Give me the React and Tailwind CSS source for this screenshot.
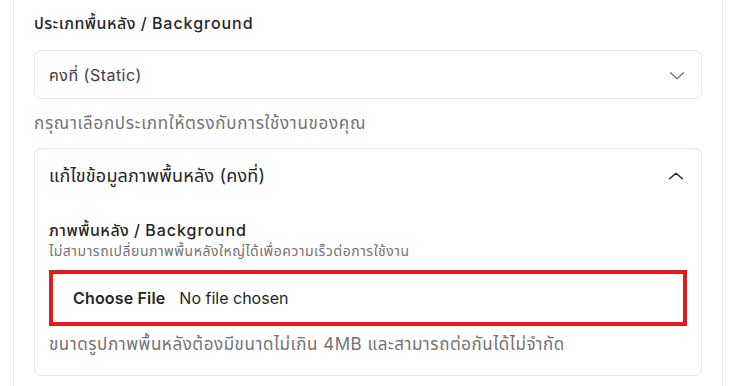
import React from "react";

function ChevronDown() {
  return (
    <svg width="22" height="22" viewBox="0 0 24 24" fill="none" stroke="#737373" strokeWidth="1.4" strokeLinecap="round" strokeLinejoin="round">
      <path d="M5 9.5l7 6.5 7-6.5" />
    </svg>
  );
}
function ChevronUp() {
  return (
    <svg width="22" height="22" viewBox="0 0 24 24" fill="none" stroke="#262626" strokeWidth="1.6" strokeLinecap="round" strokeLinejoin="round">
      <path d="M5 15l7-6 7 6" />
    </svg>
  );
}

export default function App() {
  return (
    <div className="w-[736px] h-[386px] overflow-hidden bg-white" style={{ fontFamily: 'Inter, "Noto Sans Thai", "Noto Sans", sans-serif' }}>
      <div className="ml-[13px] mr-[13px] h-full border-x border-[#e5e5e5] pl-[20px] pr-[20px] pt-[11px] text-[#262626]">
        <div className="text-[16px] font-medium leading-[24px] tracking-[0.03em]">
          ประเภทพื้นหลัง / <span className="tracking-[0.06em]">Background</span>
        </div>
        <div className="mt-[15px] h-[49px] rounded-[7px] border border-[#e5e5e5] flex items-center justify-between pl-[14px] pr-[13px]">
          <span className="text-[16px] text-[#404040] tracking-[0.03em]">คงที่ (Static)</span>
          <ChevronDown />
        </div>
        <div className="mt-[12px] text-[17px] leading-[24px] tracking-[0.04em] text-[#737373]">กรุณาเลือกประเภทให้ตรงกับการใช้งานของคุณ</div>
        <div className="mt-[13px] rounded-[7px] border border-[#e5e5e5] px-[14px] pt-[14px] pb-[19px]">
          <div className="flex items-center justify-between">
            <span className="text-[18px] leading-[26px] tracking-[0.01em]">แก้ไขข้อมูลภาพพื้นหลัง (คงที่)</span>
            <ChevronUp />
          </div>
          <div className="mt-[30px] text-[16px] font-medium leading-[22px] tracking-[0.03em]">
            ภาพพื้นหลัง / <span className="tracking-[0.06em]">Background</span>
          </div>
          <div className="text-[14px] leading-[19px] tracking-[0.036em] text-[#737373]">ไม่สามารถเปลี่ยนภาพพื้นหลังใหญ่ได้เพื่อความเร็วต่อการใช้งาน</div>
          <div className="mt-[10px] h-[56px] border-[4px] border-[#e21c1c] flex items-center pl-[20px]">
            <span className="text-[16px] font-semibold text-[#262626] tracking-[0.01em]">Choose File</span>
            <span className="ml-[14px] text-[16px] text-[#262626]">No file chosen</span>
          </div>
          <div className="mt-[6px] text-[17px] leading-[24px] tracking-[0.032em] text-[#737373]">ขนาดรูปภาพพื้นหลังต้องมีขนาดไม่เกิน 4MB และสามารถต่อกันได้ไม่จำกัด</div>
        </div>
      </div>
    </div>
  );
}
